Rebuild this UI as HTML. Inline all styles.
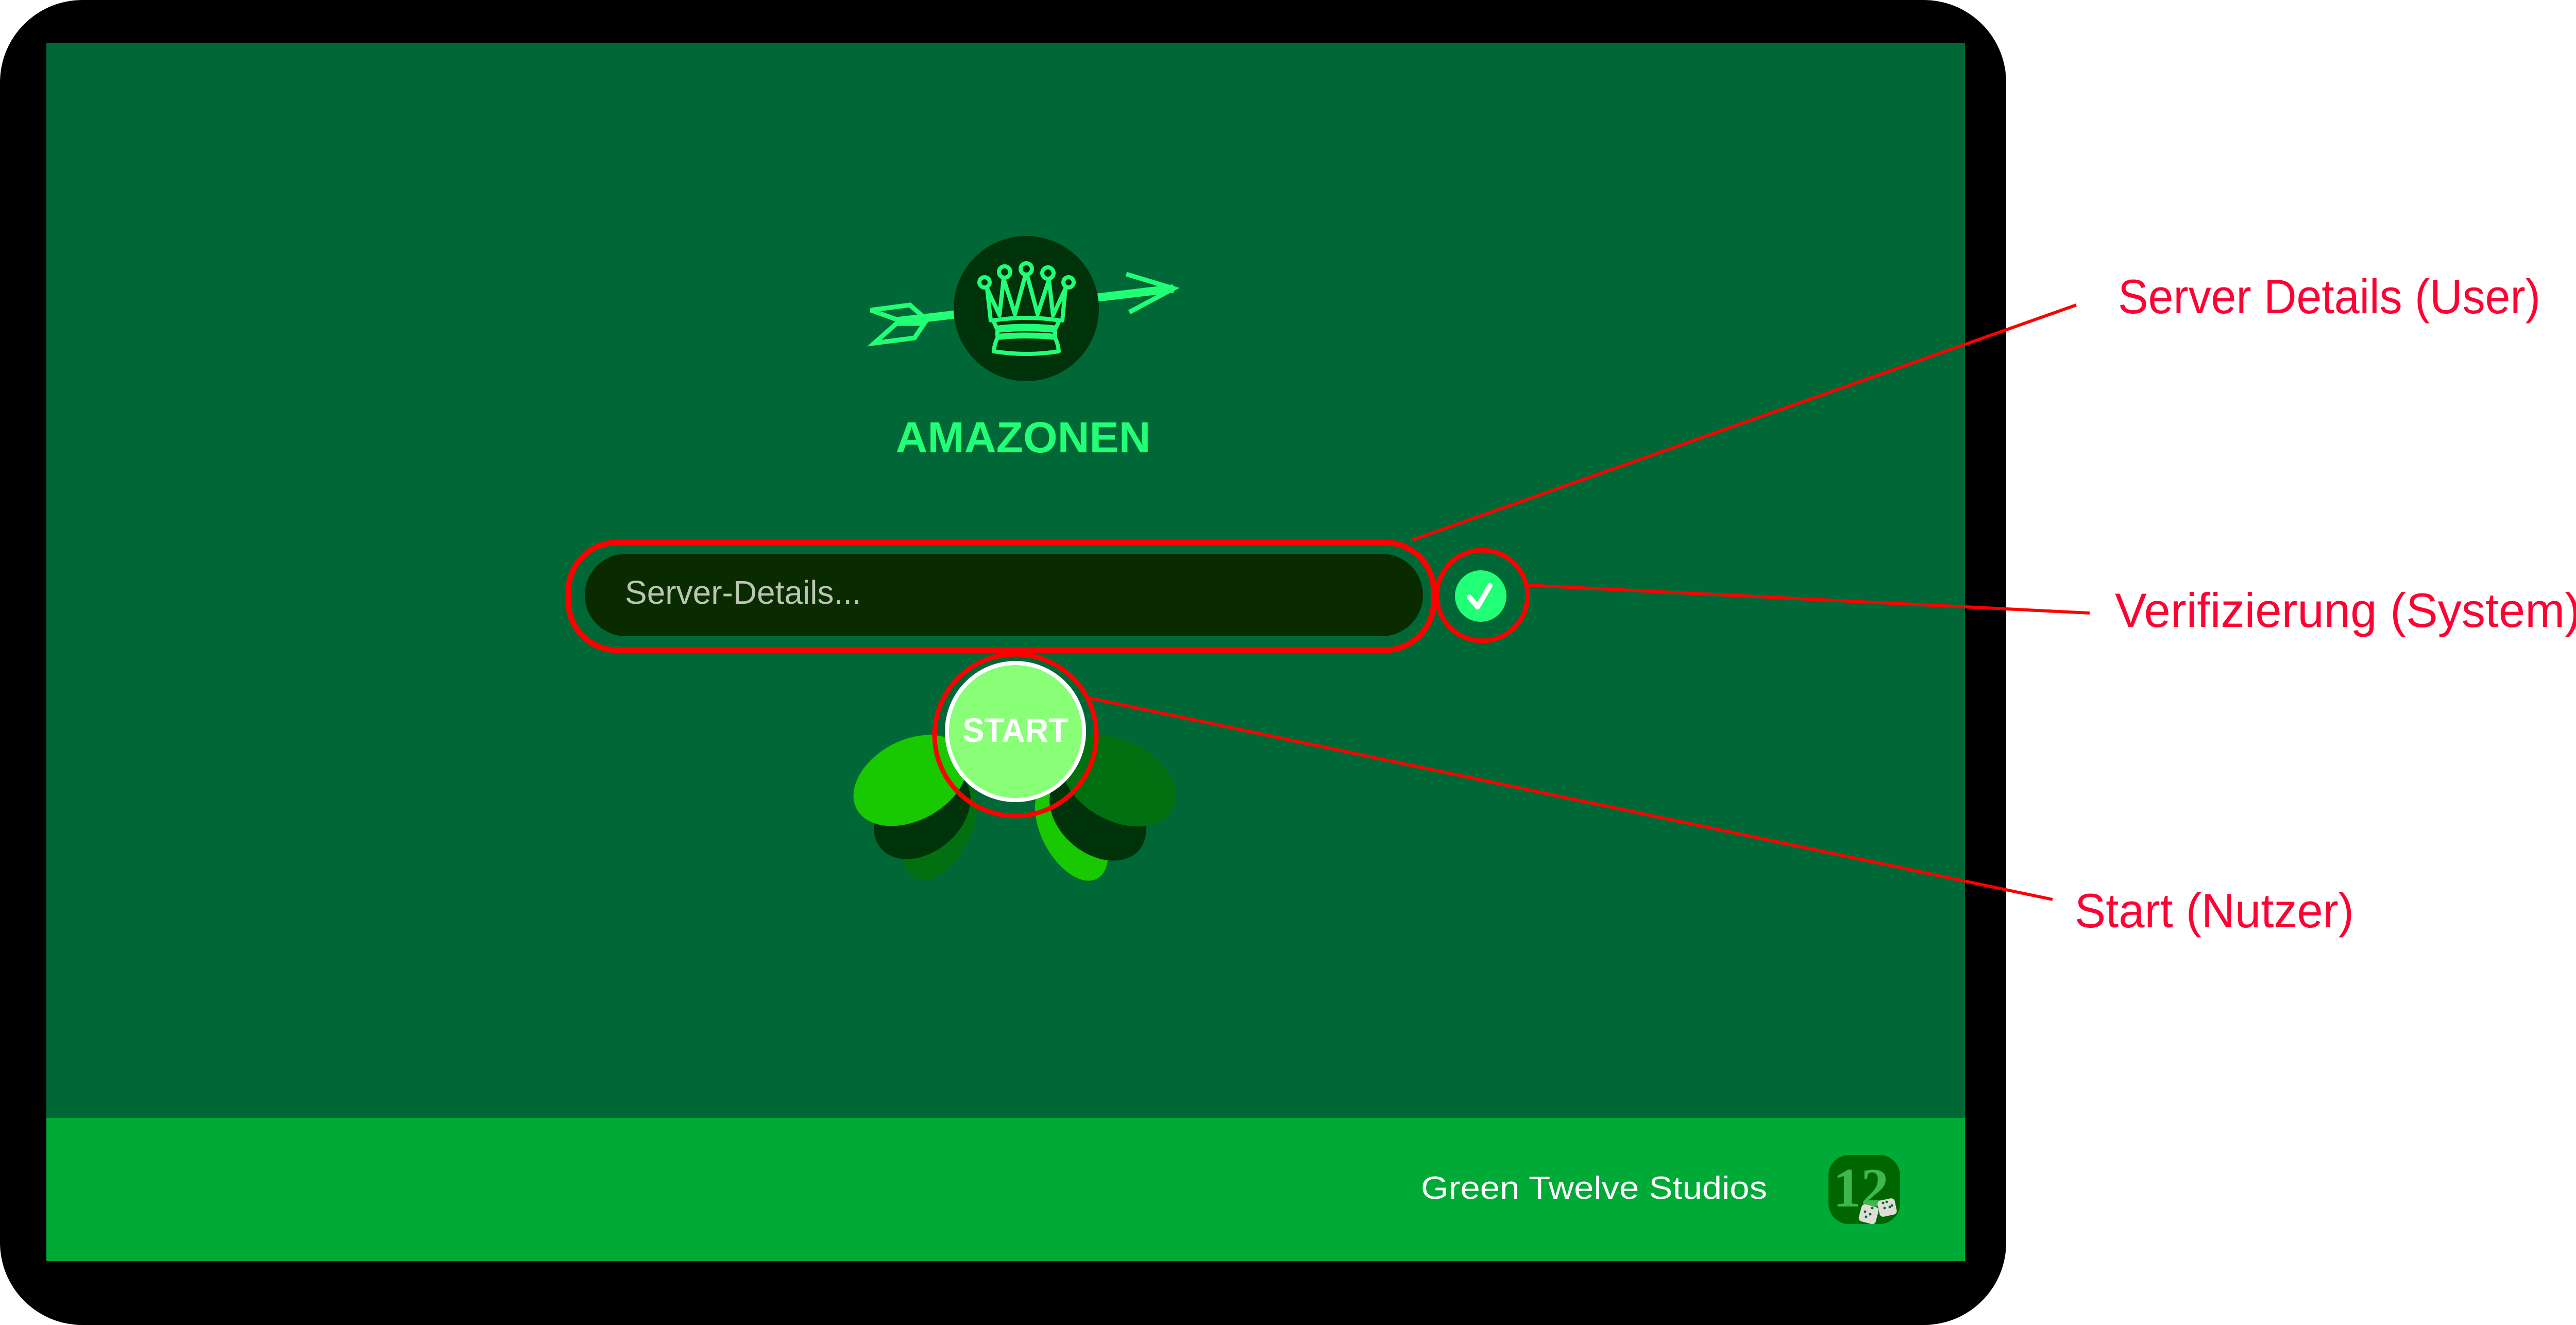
<!DOCTYPE html>
<html><head><meta charset="utf-8"><style>
html,body{margin:0;padding:0;background:#fff;}
svg{display:block}
</style></head><body>
<svg width="5014" height="2572" viewBox="0 0 5014 2572" xmlns="http://www.w3.org/2000/svg">
<rect x="0" y="0" width="5014" height="2572" fill="#fff"/>
<rect x="0" y="0" width="3894" height="2572" rx="160" fill="#000"/>
<rect x="90" y="83" width="3724" height="2088" fill="#006837"/>
<rect x="90" y="2170" width="3724" height="278" fill="#00aa36"/>

<!-- arrow -->
<g stroke="#22ff77" stroke-width="9" fill="none" stroke-linejoin="miter">
<line x1="1740" y1="624" x2="2278" y2="560" stroke-width="16"/>
<polyline points="2186,532 2278,560 2192,606"/>
<polygon points="1690,602 1766,592 1791,614 1740,620"/>
<polygon points="1740,628 1794,628 1775,656 1697,666"/>
</g>
<circle cx="1992" cy="599" r="141" fill="#00330a"/>
<!-- crown -->
<g stroke="#22ff77" stroke-width="8" fill="none" stroke-linejoin="round" stroke-linecap="round">
<circle cx="1911" cy="548" r="10"/>
<circle cx="1950" cy="528" r="11"/>
<circle cx="1992" cy="522" r="11"/>
<circle cx="2034" cy="530" r="11"/>
<circle cx="2074" cy="548" r="10"/>
<path d="M1923,622 L1916,560 L1940,612 L1948,541 L1970,610 L1990,535 L1994,535 L2014,610 L2036,543 L2044,612 L2068,560 L2062,622"/>
<path d="M1928,622 Q1992,612 2056,622 L2050,636 Q1992,629 1934,636 Z"/>
<path d="M1936,642 Q1992,636 2048,642 L2048,652 Q1992,647 1936,652 Z"/>
<path d="M1936,656 Q1930,668 1929,682 Q1992,692 2055,682 Q2054,668 2048,656 Q1992,650 1936,656 Z"/>
</g>
<text x="1986" y="878" text-anchor="middle" font-family="Liberation Sans, sans-serif" font-weight="bold" font-size="84" fill="#22ff77" textLength="495" lengthAdjust="spacingAndGlyphs">AMAZONEN</text>

<!-- input -->
<rect x="1103" y="1053" width="1680" height="209" rx="95" fill="none" stroke="#f00" stroke-width="11"/>
<rect x="1135" y="1075" width="1627" height="160" rx="80" fill="#0a2a00"/>
<text x="1213" y="1172" font-family="Liberation Sans, sans-serif" font-size="64" fill="#b9c7b2">Server-Details...</text>
<!-- check -->
<circle cx="2877" cy="1156" r="88" fill="none" stroke="#f00" stroke-width="9"/>
<circle cx="2874" cy="1157" r="50" fill="#22ff77"/>
<polyline points="2852,1159 2868,1178 2892,1137" fill="none" stroke="#fff" stroke-width="10" stroke-linecap="round" stroke-linejoin="round"/>

<!-- leaves -->
<g>
<ellipse cx="1825" cy="1612" rx="105" ry="58" transform="rotate(-62 1825 1612)" fill="#007010"/>
<ellipse cx="1790" cy="1579" rx="105" ry="75" transform="rotate(-40 1790 1579)" fill="#00330a"/>
<ellipse cx="1767" cy="1515" rx="118" ry="78" transform="rotate(-28 1767 1515)" fill="#18c800"/>
<ellipse cx="2080" cy="1613" rx="105" ry="58" transform="rotate(62 2080 1613)" fill="#18c800"/>
<ellipse cx="2131" cy="1582" rx="105" ry="75" transform="rotate(40 2131 1582)" fill="#00330a"/>
<ellipse cx="2172" cy="1516" rx="118" ry="78" transform="rotate(28 2172 1516)" fill="#007010"/>
</g>
<!-- start -->
<circle cx="1971" cy="1427" r="157" fill="none" stroke="#f00" stroke-width="9"/>
<circle cx="1971" cy="1420" r="133" fill="#88ff77" stroke="#fff" stroke-width="8"/>
<text x="1971" y="1440" text-anchor="middle" font-family="Liberation Sans, sans-serif" font-weight="bold" font-size="66" fill="#fff" textLength="205" lengthAdjust="spacingAndGlyphs">START</text>

<!-- annotation lines -->
<g stroke="#f00" stroke-width="6">
<line x1="2742" y1="1048" x2="4030" y2="592"/>
<line x1="2966" y1="1136" x2="4056" y2="1190"/>
<line x1="2110" y1="1354" x2="3984" y2="1746"/>
</g>
<g font-family="Liberation Sans, sans-serif" font-size="94" fill="#ff0033">
<text x="4111" y="608" textLength="820" lengthAdjust="spacingAndGlyphs">Server Details (User)</text>
<text x="4105" y="1217" textLength="904" lengthAdjust="spacingAndGlyphs">Verifizierung (System)</text>
<text x="4027" y="1800" textLength="542" lengthAdjust="spacingAndGlyphs">Start (Nutzer)</text>
</g>

<!-- footer -->
<text x="2758" y="2327" font-family="Liberation Sans, sans-serif" font-size="62" fill="#fff" textLength="672" lengthAdjust="spacingAndGlyphs">Green Twelve Studios</text>
<rect x="3549" y="2242" width="139" height="134" rx="40" fill="#006600"/>
<text x="3612" y="2342" text-anchor="middle" font-family="Liberation Serif, serif" font-weight="bold" font-size="108" fill="#3cb84c">12</text>
<rect x="3610" y="2340" width="34" height="34" rx="7" fill="#e0ddd6" transform="rotate(15 3627 2357)"/>
<rect x="3646" y="2328" width="34" height="32" rx="7" fill="#e0ddd6" transform="rotate(-12 3663 2344)"/>
<g fill="#006837">
<circle cx="3620" cy="2352" r="2.5"/><circle cx="3630" cy="2357" r="2.5"/><circle cx="3622" cy="2362" r="2.5"/><circle cx="3634" cy="2345" r="2.5"/>
<circle cx="3655" cy="2335" r="2.5"/><circle cx="3662" cy="2333" r="2.5"/><circle cx="3668" cy="2343" r="2.5"/><circle cx="3658" cy="2345" r="2.5"/><circle cx="3672" cy="2340" r="2.5"/>
</g>
</svg>
</body></html>
